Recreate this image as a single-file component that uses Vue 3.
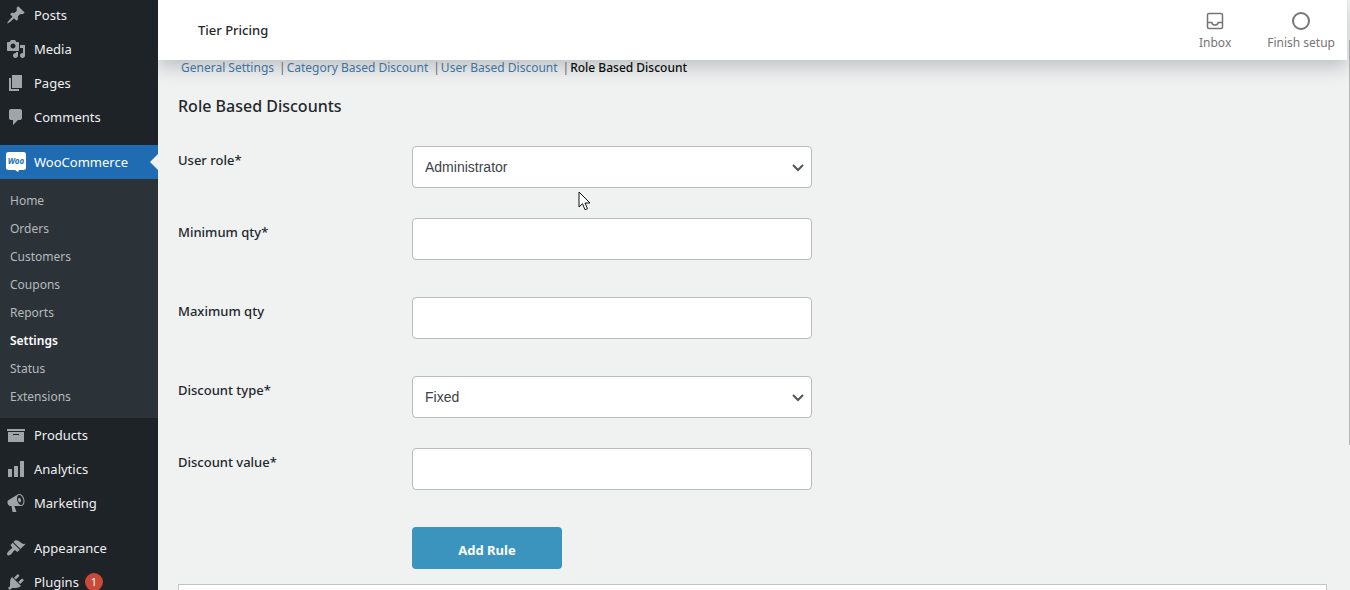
<template>
  <div class="admin">
    <nav class="sidebar" aria-label="Main menu">
      <ul class="menu">
        <li v-for="item in menu" :key="item.label" :class="{ separated: item.separated }">
          <a href="#" class="menu-item" :class="{ current: item.children }">
            <svg v-if="item.icon" class="menu-icon" viewBox="0 0 20 20" aria-hidden="true">
              <path :d="item.icon" />
            </svg>
            <svg v-else class="menu-icon woo" viewBox="0 0 20 20" aria-hidden="true">
              <path d="M2.5 0h15A2.5 2.5 0 0 1 20 2.500v13a2.500 2.500 0 0 1-2.500 2.500H13l-1 2-3-2H2.500A2.500 2.500 0 0 1 0 15.500v-13A2.500 2.500 0 0 1 2.500 0z" />
              <text x="10" y="12" text-anchor="middle">Woo</text>
            </svg>
            <span>{{ item.label }}</span>
            <span v-if="item.count" class="count">{{ item.count }}</span>
          </a>
          <ul v-if="item.children" class="submenu">
            <li v-for="child in item.children" :key="child">
              <a href="#" :class="{ active: child === 'Settings' }">{{ child }}</a>
            </li>
          </ul>
        </li>
      </ul>
    </nav>

    <div class="page">
      <header class="topbar">
        <h1>Tier Pricing</h1>
        <div class="activity">
          <button type="button">
            <svg width="24" height="24" viewBox="0 0 24 24" fill="none" stroke="currentColor" stroke-width="1.500" aria-hidden="true">
              <rect x="4.500" y="4.500" width="15" height="15" rx="1.500" />
              <path d="M4.500 13.500h4.300c.3 1.600 1.500 2.500 3.200 2.500s2.900-.9 3.200-2.500h4.300" />
            </svg>
            Inbox
          </button>
          <button type="button">
            <svg width="24" height="24" viewBox="0 0 24 24" fill="none" stroke="currentColor" stroke-width="2" aria-hidden="true">
              <circle cx="12" cy="12" r="8" />
            </svg>
            Finish setup
          </button>
        </div>
      </header>

      <main class="content">
        <ul class="tabs">
          <li v-for="tab in tabs" :key="tab">
            <a href="#" :class="{ active: tab === currentTab }">{{ tab }}</a>
          </li>
        </ul>
        <h2>Role Based Discounts</h2>

        <form @submit.prevent>
          <div v-for="field in fields" :key="field.id" class="row">
            <label :for="field.id">{{ field.label }}</label>
            <div v-if="field.options" class="select-wrap">
              <select :id="field.id" v-model="form[field.id]">
                <option v-for="option in field.options" :key="option">{{ option }}</option>
              </select>
              <svg class="chevron" viewBox="0 0 16 16" aria-hidden="true">
                <path d="M3 5l5 5 5-5" />
              </svg>
            </div>
            <input v-else :id="field.id" v-model="form[field.id]" type="text">
          </div>
          <button type="submit" class="submit">Add Rule</button>
        </form>

        <div class="rules"></div>
      </main>
    </div>

    <div class="scroll-thumb"></div>
    <svg class="cursor" viewBox="0 0 13 20" aria-hidden="true">
      <path d="M1 1v15l3.500-3.300 2.500 6 2.500-1-2.500-5.700h5z" />
    </svg>
  </div>
</template>

<script setup>
import { reactive, ref } from 'vue'

const menu = [
  { label: 'Posts', icon: 'M10.44 3.02l1.82-1.82 6.36 6.35-1.83 1.82c-1.05-.68-2.48-.57-3.41.36l-.75.75c-.92.93-1.04 2.35-.35 3.41l-1.83 1.82-2.41-2.41-2.8 2.79c-.42.42-3.38 2.71-3.8 2.29s1.86-3.39 2.28-3.81l2.79-2.79L4.1 9.36l1.83-1.82c1.05.69 2.48.57 3.4-.36l.75-.75c.93-.92 1.05-2.35.36-3.41z' },
  { label: 'Media', icon: 'M13 11V4c0-.55-.45-1-1-1h-1.67L9 1H5L3.67 3H2c-.55 0-1 .45-1 1v7c0 .55.45 1 1 1h10c.55 0 1-.45 1-1zM7 4.5c1.38 0 2.5 1.12 2.5 2.5S8.38 9.5 7 9.5 4.5 8.38 4.5 7 5.62 4.5 7 4.5zM14 6h5v10.5c0 1.38-1.12 2.5-2.5 2.5S14 17.88 14 16.5s1.12-2.5 2.5-2.5c.17 0 .34.02.5.05V9h-3V6zm-4 8.05V13h2v3.5c0 1.38-1.12 2.5-2.5 2.5S7 17.88 7 16.5 8.12 14 9.5 14c.17 0 .34.02.5.05z' },
  { label: 'Pages', icon: 'M6 15V2h10v13H6zm-1 1h8v2H3V5h2v11z' },
  { label: 'Comments', icon: 'M5 2h9c1.1 0 2 .9 2 2v7c0 1.1-.9 2-2 2h-2l-5 5v-5H5c-1.1 0-2-.9-2-2V4c0-1.1.9-2 2-2z' },
  {
    label: 'WooCommerce',
    separated: true,
    children: ['Home', 'Orders', 'Customers', 'Coupons', 'Reports', 'Settings', 'Status', 'Extensions']
  },
  { label: 'Products', icon: 'M19 4v2H1V4h18zM2 7h16v10H2V7zm11 3V9H7v1h6z' },
  { label: 'Analytics', icon: 'M18 18V2h-4v16h4zm-6 0V7H8v11h4zm-6 0v-8H2v8h4z' },
  { label: 'Marketing', icon: 'M18.15 5.94c.46 1.62.38 3.22-.02 4.48-.42 1.28-1.26 2.18-2.3 2.48-.16.06-.26.06-.4.06-.06.02-.12.02-.18.02-.06.02-.14.02-.22.02h-6.8l2.22 5.5c.02.14-.06.26-.14.34-.08.1-.24.16-.34.16H6.95c-.1 0-.26-.06-.34-.16-.08-.08-.16-.2-.14-.34l-1-5.5H4.25l-.02-.02c-.5.06-1.08-.18-1.54-.62s-.88-1.08-1.06-1.88c-.24-.8-.2-1.56-.02-2.2.18-.62.58-1.08 1.06-1.3l.02-.02 9-5.4c.1-.06.18-.1.24-.16.06-.04.14-.08.24-.12.16-.08.28-.12.5-.18 1.04-.3 2.24.1 3.22.98s1.84 2.24 2.26 3.86zm-2.58 5.98h-.02c.4-.1.74-.34 1.04-.7.58-.7.86-1.76.86-3.04 0-.64-.1-1.3-.28-1.98-.34-1.36-1.02-2.5-1.78-3.24s-1.68-1.1-2.46-.88c-.82.22-1.4.96-1.7 2-.32 1.04-.28 2.36.06 3.72.38 1.36 1 2.5 1.8 3.24.78.74 1.62 1.1 2.48.88zm-2.54-7.08c.22-.04.42-.02.62.04.38.16.76.48 1.02 1s.42 1.2.42 1.78c0 .3-.04.56-.12.8-.18.48-.44.84-.86.94-.34.1-.8-.06-1.14-.4s-.64-.86-.78-1.5c-.18-.62-.12-1.24.02-1.72s.48-.84.82-.94z' },
  { label: 'Appearance', separated: true, icon: 'M14.48 11.06L7.41 3.99l1.5-1.5c.5-.56 2.3-.47 3.51.32 1.21.8 1.43 1.28 2.91 2.1 1.18.64 2.45 1.26 4.45.85zm-.71.71L6.7 4.7 4.93 6.47c-.39.39-.39 1.02 0 1.41l1.06 1.06c.39.39.39 1.03 0 1.42-.6.6-1.43 1.11-2.21 1.69-.35.26-.7.53-1.01.84C1.43 14.23.4 16.08 1.4 17.07c.99 1 2.84-.03 4.18-1.36.31-.31.58-.66.85-1.02.57-.78 1.08-1.61 1.69-2.21.39-.39 1.02-.39 1.41 0l1.06 1.06c.39.39 1.02.39 1.41 0z' },
  { label: 'Plugins', count: 1, icon: 'M13.11 4.36L9.87 7.6 8 5.73l3.24-3.24c.35-.34 1.05-.2 1.56.32.52.51.66 1.21.31 1.55zm-8 1.77l.91-1.12 9.01 9.01-1.19.84c-.71.71-2.63 1.16-3.82 1.16H6.14L4.9 17.26c-.59.59-1.54.59-2.12 0-.59-.58-.59-1.53 0-2.12l1.24-1.24v-3.88c0-1.13.4-3.19 1.09-3.89zm7.26 3.97l3.24-3.24c.34-.35 1.04-.21 1.55.31.52.51.66 1.21.31 1.55l-3.24 3.25z' }
]

const tabs = ['General Settings', 'Category Based Discount', 'User Based Discount', 'Role Based Discount']
const currentTab = ref('Role Based Discount')

const fields = [
  { id: 'role', label: 'User role*', options: ['Administrator'] },
  { id: 'min', label: 'Minimum qty*' },
  { id: 'max', label: 'Maximum qty' },
  { id: 'type', label: 'Discount type*', options: ['Fixed'] },
  { id: 'value', label: 'Discount value*' }
]

const form = reactive({ role: 'Administrator', min: '', max: '', type: 'Fixed', value: '' })
</script>

<style>
body {
  margin: 0;
  background: #f0f2f1;
}
</style>

<style scoped>
* {
  box-sizing: border-box;
}

.admin {
  position: relative;
  display: flex;
  height: 100vh;
  overflow: hidden;
  background: #f0f2f1;
  color: #23282d;
  font-family: "Segoe UI", "Noto Sans", sans-serif;
  font-size: 13px;
}

ul {
  list-style: none;
  margin: 0;
  padding: 0;
}

a {
  text-decoration: none;
}

.sidebar {
  position: relative;
  z-index: 2;
  flex: 0 0 158px;
  background: #1d2327;
}

.menu {
  margin-top: -2px;
}

.separated {
  margin-top: 11px;
}

.menu-item {
  position: relative;
  display: flex;
  align-items: center;
  gap: 8px;
  height: 34px;
  padding-left: 6px;
  color: #f0f0f1;
}

.menu-icon {
  width: 20px;
  height: 20px;
  fill: #a0a5aa;
}

.menu-icon.woo {
  fill: #fff;
}

.woo text {
  fill: #2271b1;
  font-size: 8px;
  font-style: italic;
  font-weight: 700;
}

.current {
  background: #1f6cb3;
  color: #fff;
}

.current::after {
  content: "";
  position: absolute;
  right: 0;
  top: 9px;
  border: 8px solid transparent;
  border-left: 0;
  border-right-color: #f0f2f1;
}

.count {
  min-width: 18px;
  height: 18px;
  margin-left: -2px;
  border-radius: 9px;
  background: #ca4a37;
  color: #fff;
  font-size: 11px;
  line-height: 18px;
  text-align: center;
}

.submenu {
  padding: 8px 0 7px;
  background: #2c3338;
}

.submenu a {
  display: block;
  padding-left: 10px;
  color: #b4b9be;
  font-size: 12px;
  line-height: 28px;
}

.submenu a.active {
  color: #fff;
  font-weight: 600;
}

.page {
  flex: 1;
  min-width: 0;
}

.topbar {
  position: relative;
  z-index: 1;
  display: flex;
  align-items: center;
  justify-content: space-between;
  height: 60px;
  margin-right: 3px;
  padding: 0 12px 0 40px;
  background: #fff;
  box-shadow: 0 8px 16px rgba(85, 93, 102, 0.3);
}

h1 {
  margin: 0;
  font-size: 13px;
  font-weight: 500;
}

.activity {
  display: flex;
  gap: 36px;
}

.activity button {
  display: flex;
  flex-direction: column;
  align-items: center;
  padding: 2px 0 0;
  border: 0;
  background: none;
  color: #757575;
  font-family: inherit;
  font-size: 12px;
  line-height: 20px;
}

.content {
  padding: 0 23px 0 20px;
}

.tabs {
  display: flex;
  padding-left: 3px;
  font-size: 12px;
  line-height: 16px;
}

.tabs li + li::before {
  content: "|";
  margin: 0 1px 0 5px;
  color: #646970;
}

.tabs a {
  color: #3d76ab;
}

.tabs a.active {
  color: #000;
  font-weight: 500;
}

h2 {
  margin: 18px 0 28px;
  font-size: 16px;
  font-weight: 500;
  line-height: 24px;
}

.row {
  display: grid;
  grid-template-columns: 234px 400px;
  margin-bottom: 37px;
}

.row:has(select) {
  margin-bottom: 30px;
}

label {
  padding-top: 4px;
  font-weight: 500;
  line-height: 20px;
}

.select-wrap {
  position: relative;
}

input,
select {
  width: 100%;
  height: 42px;
  padding: 0 12px;
  border: 1px solid #b9bbbd;
  border-radius: 4px;
  background: #fff;
  color: #3c4248;
  font-family: "Liberation Sans", Arial, sans-serif;
  font-size: 14px;
}

select {
  display: block;
  appearance: none;
}

.chevron {
  position: absolute;
  right: 6px;
  top: 14px;
  width: 16px;
  height: 16px;
  fill: none;
  stroke: #50575e;
  stroke-width: 2;
  pointer-events: none;
}

.submit {
  display: block;
  width: 150px;
  height: 42px;
  margin-left: 234px;
  padding: 4px 0 0;
  border: 0;
  border-radius: 4px;
  background: #3a94be;
  color: #fff;
  font-family: inherit;
  font-size: 13px;
  font-weight: 700;
}

.rules {
  height: 60px;
  margin-top: 15px;
  border: 1px solid #c3c4c7;
  background: #fff;
}

.scroll-thumb {
  position: absolute;
  right: 0;
  top: 40px;
  width: 1px;
  height: 405px;
  background: #b5b5b5;
}

.cursor {
  position: absolute;
  left: 578px;
  top: 191px;
  width: 13px;
  height: 20px;
  fill: #fff;
  stroke: #111;
  z-index: 2;
}
</style>
